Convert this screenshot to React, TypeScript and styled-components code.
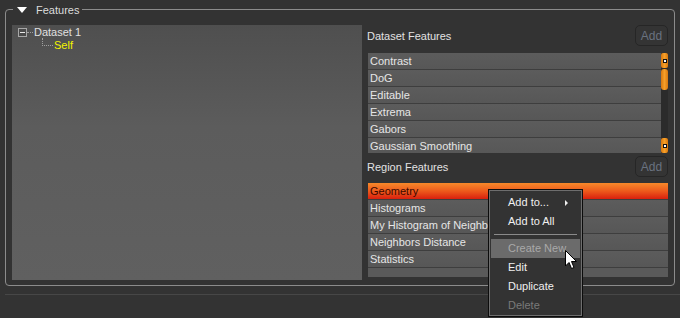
import styled, { createGlobalStyle } from "styled-components";

const GlobalStyle = createGlobalStyle`
    html, body {
        margin: 0;
        padding: 0;
        background: #333333;
    }
    body {
        font-family: "Liberation Sans", Arial, sans-serif;
        font-size: 11px;
        color: #e2e2e2;
    }
`;

const Page = styled.div`
    position: relative;
    width: 680px;
    height: 318px;
    overflow: hidden;
    background: #333333;
    padding-top: 9px;
    box-sizing: border-box;
`;

const GroupBox = styled.div`
    position: relative;
    margin-left: 5px;
    width: 670px;
    height: 277px;
    box-sizing: border-box;
    border: 1px solid #8c8c8c;
    border-radius: 4px;
    padding: 15px 3px 5px 6px;
    display: flex;
`;

const Legend = styled.div`
    position: absolute;
    top: -7px;
    left: 7px;
    padding: 0 3px 0 4px;
    height: 13px;
    display: flex;
    align-items: center;
    gap: 9px;
    background: #333333;
    color: #dcdcdc;
    font-size: 11px;
`;

const Caret = styled.span`
    width: 0;
    height: 0;
    border-left: 5px solid transparent;
    border-right: 5px solid transparent;
    border-top: 6px solid #ffffff;
`;

const Divider = styled.div`
    margin: 8px 0 0 5px;
    height: 1px;
    background: #474747;
`;

const TreePanel = styled.div`
    width: 350px;
    flex: none;
    background: linear-gradient(#4f4f4f, #5c5c5c 40%, #606060);
    padding: 1px 0 0 6px;
    box-sizing: border-box;
`;

const TreeRow = styled.div`
    display: flex;
    align-items: center;
    height: 13px;
`;

const Expander = styled.span`
    position: relative;
    width: 9px;
    height: 9px;
    box-sizing: border-box;
    border: 1px solid #a8a8a8;
    background: #4a4a4a;
    &::after {
        content: "";
        position: absolute;
        left: 1px;
        right: 1px;
        top: 3px;
        height: 1px;
        background: #e8e8e8;
    }
`;

const Dots = styled.span`
    width: 6px;
    margin: 0 1px 0 0;
    border-top: 1px dotted #a0a0a0;
`;

const ChildRow = styled.div`
    display: flex;
    align-items: flex-end;
    height: 13px;
    margin-left: 24px;
`;

const Elbow = styled.span`
    width: 10px;
    height: 7px;
    margin-bottom: 6px;
    border-left: 1px dotted #a0a0a0;
    border-bottom: 1px dotted #a0a0a0;
`;

const TreeLabel = styled.span<{ $active?: boolean }>`
    color: ${(p) => (p.$active ? "#f4f400" : "#e0e0e0")};
    margin-left: ${(p) => (p.$active ? "1px" : "0")};
    line-height: 13px;
`;

const RightColumn = styled.div`
    flex: 1;
    display: flex;
    flex-direction: column;
    padding: 0 3px 0 6px;
    min-width: 0;
`;

const SectionHeader = styled.div<{ $gap: number }>`
    display: flex;
    align-items: center;
    justify-content: space-between;
    height: 21px;
    margin-bottom: ${(p) => p.$gap}px;
    margin-left: -1px;
    flex: none;
`;

const AddButton = styled.button`
    width: 33px;
    height: 21px;
    padding: 0;
    box-sizing: border-box;
    border: 1px solid #262626;
    border-radius: 5px;
    background: #343434;
    color: #6a7280;
    font-family: "Liberation Sans", Arial, sans-serif;
    font-size: 12px;
`;

const ListFrame = styled.div<{ $height?: number }>`
    display: flex;
    ${(p) => (p.$height ? `height: ${p.$height}px; flex: none;` : "flex: 1;")}
    margin-bottom: 3px;
`;

const List = styled.div`
    flex: 1;
    background: #5a5a5a;
    overflow: hidden;
`;

const Row = styled.div<{ $selected?: boolean }>`
    height: 16px;
    line-height: 16px;
    padding-left: 2px;
    border-bottom: 1px solid #3e3e3e;
    white-space: nowrap;
    color: ${(p) => (p.$selected ? "#3a0800" : "#e6e6e6")};
    background: ${(p) =>
        p.$selected ? "linear-gradient(#f7892a, #ec5a1c 50%, #d8200e)" : "linear-gradient(#5c5c5c, #575757)"};
`;

const ScrollTrack = styled.div`
    width: 7px;
    flex: none;
    background: #2b2b2b;
    display: flex;
    flex-direction: column;
    justify-content: space-between;
`;

const ScrollArrow = styled.div`
    height: 15px;
    border-radius: 2px;
    background: linear-gradient(90deg, #d8780e, #f6a02a 50%, #d8780e);
    display: flex;
    align-items: center;
    justify-content: center;
    &::after {
        content: "";
        width: 2px;
        height: 2px;
        border: 1px solid #111;
        background: #fff;
    }
`;

const ScrollThumb = styled.div`
    height: 21px;
    margin-top: 1px;
    border-radius: 3px;
    background: linear-gradient(90deg, #d8780e, #f6a02a 50%, #d8780e);
`;

const ScrollSpace = styled.div`
    flex: 1;
`;

const Menu = styled.div`
    position: absolute;
    left: 488px;
    top: 189px;
    width: 95px;
    height: 128px;
    box-sizing: border-box;
    background: #333333;
    border: 1px solid #0c0c0c;
    box-shadow: inset 0 0 0 1px #6e6e6e;
    padding: 3px 2px;
`;

const MenuItem = styled.div<{ $state?: "hover" | "disabled" }>`
    position: relative;
    height: 19px;
    line-height: 19px;
    padding-left: 17px;
    color: ${(p) => (p.$state === "disabled" ? "#7a7a7a" : p.$state === "hover" ? "#a9a9a9" : "#f0f0f0")};
    background: ${(p) => (p.$state === "hover" ? "#6b6b6b" : "transparent")};
`;

const SubArrow = styled.span`
    position: absolute;
    right: 12px;
    top: 7px;
    width: 0;
    height: 0;
    border-top: 3px solid transparent;
    border-bottom: 3px solid transparent;
    border-left: 3px solid #f0f0f0;
`;

const MenuSeparator = styled.div`
    height: 1px;
    margin: 3px 3px 4px;
    background: #8a8a8a;
`;

const Cursor = styled.svg`
    position: absolute;
    left: 565px;
    top: 250px;
`;

const datasetFeatures = ["Contrast", "DoG", "Editable", "Extrema", "Gabors", "Gaussian Smoothing"];
const regionFeatures = ["Geometry", "Histograms", "My Histogram of Neighbors", "Neighbors Distance", "Statistics"];

export default function App() {
    return (
        <Page>
            <GlobalStyle />
            <GroupBox>
                <Legend>
                    <Caret />
                    <span>Features</span>
                </Legend>
                <TreePanel>
                    <TreeRow>
                        <Expander />
                        <Dots />
                        <TreeLabel>Dataset 1</TreeLabel>
                    </TreeRow>
                    <ChildRow>
                        <Elbow />
                        <TreeLabel $active>Self</TreeLabel>
                    </ChildRow>
                </TreePanel>
                <RightColumn>
                    <SectionHeader $gap={7}>
                        <span>Dataset Features</span>
                        <AddButton>Add</AddButton>
                    </SectionHeader>
                    <ListFrame $height={100}>
                        <List>
                            {datasetFeatures.map((f) => (
                                <Row key={f}>{f}</Row>
                            ))}
                        </List>
                        <ScrollTrack>
                            <div>
                                <ScrollArrow />
                                <ScrollThumb />
                            </div>
                            <ScrollSpace />
                            <ScrollArrow />
                        </ScrollTrack>
                    </ListFrame>
                    <SectionHeader $gap={6}>
                        <span>Region Features</span>
                        <AddButton>Add</AddButton>
                    </SectionHeader>
                    <ListFrame>
                        <List>
                            {regionFeatures.map((f, i) => (
                                <Row key={f} $selected={i === 0}>
                                    {f}
                                </Row>
                            ))}
                        </List>
                    </ListFrame>
                </RightColumn>
            </GroupBox>
            <Divider />
            <Menu>
                <MenuItem>
                    Add to...
                    <SubArrow />
                </MenuItem>
                <MenuItem>Add to All</MenuItem>
                <MenuSeparator />
                <MenuItem $state="hover">Create New</MenuItem>
                <MenuItem>Edit</MenuItem>
                <MenuItem>Duplicate</MenuItem>
                <MenuItem $state="disabled">Delete</MenuItem>
            </Menu>
            <Cursor width="13" height="20" viewBox="0 0 13 20">
                <path d="M0.5 0.5 L0.5 16 L4 12.5 L6.5 18.5 L9 17.5 L6.5 11.5 L11.5 11.5 Z" fill="#ffffff" stroke="#000000" strokeWidth="1" />
            </Cursor>
        </Page>
    );
}
